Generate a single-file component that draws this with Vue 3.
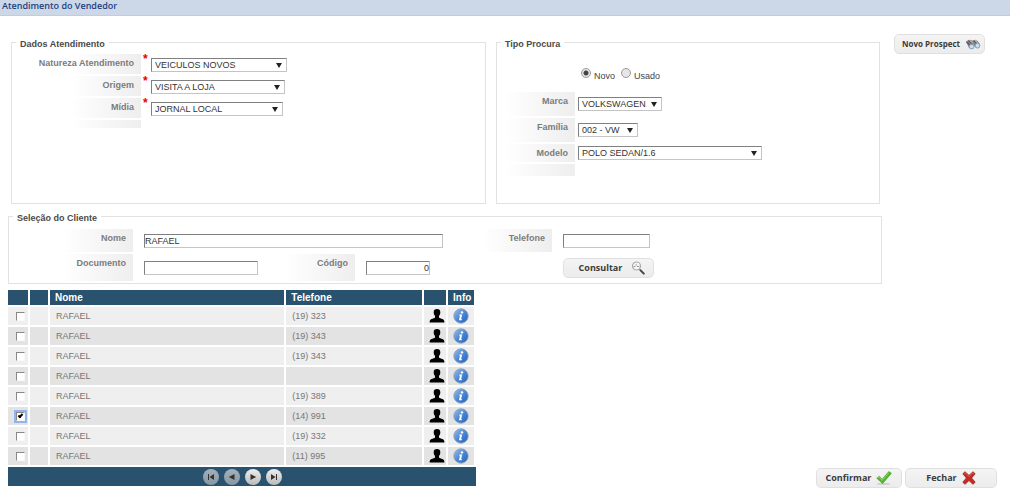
<script setup>
import { ref } from 'vue'

const natureza = ref('VEICULOS NOVOS')
const origem = ref('VISITA A LOJA')
const midia = ref('JORNAL LOCAL')
const tipo = ref('Novo')
const marca = ref('VOLKSWAGEN')
const familia = ref('002 - VW')
const modelo = ref('POLO SEDAN/1.6')
const nome = ref('RAFAEL')
const telefone = ref('')
const documento = ref('')
const codigo = ref('0')

const clientes = ref([
  { id: 1, nome: 'RAFAEL', telefone: '(19) 323', marcado: false },
  { id: 2, nome: 'RAFAEL', telefone: '(19) 343', marcado: false },
  { id: 3, nome: 'RAFAEL', telefone: '(19) 343', marcado: false },
  { id: 4, nome: 'RAFAEL', telefone: '', marcado: false },
  { id: 5, nome: 'RAFAEL', telefone: '(19) 389', marcado: false },
  { id: 6, nome: 'RAFAEL', telefone: '(14) 991', marcado: true },
  { id: 7, nome: 'RAFAEL', telefone: '(19) 332', marcado: false },
  { id: 8, nome: 'RAFAEL', telefone: '(11) 995', marcado: false }
])
</script>

<template>
  <div class="page">
    <header class="titlebar">
      <h1>Atendimento do Vendedor</h1>
    </header>

    <main>
      <div class="top">
        <div class="forms">
          <div class="panels">
            <fieldset class="panel">
              <legend>Dados Atendimento</legend>
              <div class="rows rows-dados">
                <label for="natureza" class="lbl">Natureza Atendimento</label>
                <span class="req">*</span>
                <span class="select w-136">
                  <select id="natureza" v-model="natureza"><option>VEICULOS NOVOS</option></select>
                </span>
                <label for="origem" class="lbl">Origem</label>
                <span class="req">*</span>
                <span class="select w-134">
                  <select id="origem" v-model="origem"><option>VISITA A LOJA</option></select>
                </span>
                <label for="midia" class="lbl">Mídia</label>
                <span class="req">*</span>
                <span class="select w-132">
                  <select id="midia" v-model="midia"><option>JORNAL LOCAL</option></select>
                </span>
                <span class="lbl"></span>
              </div>
            </fieldset>

            <fieldset class="panel">
              <legend>Tipo Procura</legend>
              <div class="radios">
                <label><input v-model="tipo" type="radio" name="tipo" value="Novo"><span>Novo</span></label>
                <label><input v-model="tipo" type="radio" name="tipo" value="Usado"><span>Usado</span></label>
              </div>
              <div class="rows rows-tipo">
                <label for="marca" class="lbl">Marca</label>
                <span class="select w-84">
                  <select id="marca" v-model="marca"><option>VOLKSWAGEN</option></select>
                </span>
                <label for="familia" class="lbl">Família</label>
                <span class="select w-60">
                  <select id="familia" v-model="familia"><option>002 - VW</option></select>
                </span>
                <label for="modelo" class="lbl">Modelo</label>
                <span class="select w-184">
                  <select id="modelo" v-model="modelo"><option>POLO SEDAN/1.6</option></select>
                </span>
                <span class="lbl"></span>
              </div>
            </fieldset>
          </div>

          <fieldset class="panel">
            <legend>Seleção do Cliente</legend>
            <div class="cliente">
              <label for="nome" class="lbl">Nome</label>
              <span class="field wide"><input id="nome" v-model="nome" type="text"></span>
              <label for="telefone" class="lbl">Telefone</label>
              <span class="field"><input id="telefone" v-model="telefone" type="text" class="tel"></span>
              <label for="documento" class="lbl">Documento</label>
              <span class="field low"><input id="documento" v-model="documento" type="text"></span>
              <label for="codigo" class="lbl">Código</label>
              <span class="field low"><input id="codigo" v-model="codigo" type="text" class="cod"></span>
              <span class="field consult">
                <button type="button" class="btn">
                  <span>Consultar</span>
                  <svg width="14" height="14" viewBox="0 0 14 14" aria-hidden="true">
                    <circle cx="5.5" cy="5" r="4" fill="#f6f6f6" stroke="#aaa" stroke-width="1.2" />
                    <path d="M2.5 5.5h2M6 5.5h2.3M5.2 3.2v1.4" stroke="#999" stroke-width="1" />
                    <path d="M8.4 8.2l1.6 1.5" stroke="#888" stroke-width="1.2" />
                    <path d="M9.6 9.4l3.2 3.2" stroke="#444" stroke-width="2" stroke-linecap="round" />
                  </svg>
                </button>
              </span>
            </div>
          </fieldset>
        </div>

        <button type="button" class="btn prospect">
          <span>Novo Prospect</span>
          <svg width="16" height="11" viewBox="0 0 15 11" aria-hidden="true">
            <path d="M.5 2.2L4 .8l3 .6 3-.6 2.4 1.4 2.2 3.6-3 3.4-3-2.4-2 2.6-3.4-1z" fill="#8d8985" />
            <path d="M1 3.2l3.2 2.6M2.8 1.6l3.4 2.6M8 1.8l2.8 2.4" stroke="#55524f" stroke-width="1.1" />
            <path d="M4.2 1.6l3 2M9.4 1.4l2.6 2.2" stroke="#d8d5d0" stroke-width=".9" />
            <ellipse cx="6.2" cy="7.6" rx="2.5" ry="2.3" fill="#c9dcf4" stroke="#6f8fb9" stroke-width=".8" />
            <ellipse cx="12" cy="6.6" rx="2.3" ry="2.5" fill="#c9dcf4" stroke="#6f8fb9" stroke-width=".8" />
          </svg>
        </button>
      </div>

      <div class="bottom">
        <table>
          <colgroup>
            <col class="c-check"><col class="c-blank"><col class="c-nome"><col class="c-tel"><col class="c-person"><col class="c-info">
          </colgroup>
          <thead>
            <tr><th></th><th></th><th>Nome</th><th>Telefone</th><th></th><th>Info</th></tr>
          </thead>
          <tbody>
            <tr v-for="c in clientes" :key="c.id">
              <td class="check"><input v-model="c.marcado" type="checkbox" :aria-label="c.nome"></td>
              <td></td>
              <td>{{ c.nome }}</td>
              <td>{{ c.telefone }}</td>
              <td class="icon">
                <svg width="16" height="14" viewBox="0 0 16 14" aria-hidden="true">
                  <path d="M8 0c2.200 0 3.300 1.100 3.300 3.200 0 1.700-.5 2.800-1.300 3.600v1.700c.5.700 2 1 3.400 1.500 1.500.5 2 1.500 2 3.500H.6c0-2 .5-3 2-3.500C4 9.500 5.500 9.200 6 8.500V6.800C5.200 6 4.700 4.900 4.700 3.200 4.700 1.100 5.800 0 8 0z" fill="#000" />
                </svg>
              </td>
              <td class="icon">
                <button type="button" class="plain" aria-label="Info">
                  <svg width="16" height="16" viewBox="0 0 16 16">
                    <defs>
                      <linearGradient :id="'info' + c.id" x1="0" y1="0" x2="1" y2="1">
                        <stop offset="0" stop-color="#9cc3ee" />
                        <stop offset=".5" stop-color="#4a87d3" />
                        <stop offset="1" stop-color="#1f5fbd" />
                      </linearGradient>
                    </defs>
                    <circle cx="8" cy="8" r="7.2" :fill="'url(#info' + c.id + ')'" stroke="#8b9fb8" stroke-width=".9" />
                    <circle cx="9" cy="4.4" r="1.2" fill="#fff" />
                    <path d="M6.2 6.500h3L8.100 11.300h1l-.3 1H5.900l1.100-4.700H6z" fill="#fff" />
                  </svg>
                </button>
              </td>
            </tr>
          </tbody>
          <tfoot>
            <tr>
              <td colspan="6">
                <nav class="pager">
                  <button type="button" class="off" aria-label="Primeira">
                    <svg width="8" height="8" viewBox="0 0 8 8"><path d="M1 1h1v6H1zM7 1v6L2.500 4z" /></svg>
                  </button>
                  <button type="button" class="off" aria-label="Anterior">
                    <svg width="8" height="8" viewBox="0 0 8 8"><path d="M6.500 1v6L.8 4z" /></svg>
                  </button>
                  <button type="button" aria-label="Próxima">
                    <svg width="8" height="8" viewBox="0 0 8 8"><path d="M1.500 1v6L7.200 4z" /></svg>
                  </button>
                  <button type="button" aria-label="Última">
                    <svg width="8" height="8" viewBox="0 0 8 8"><path d="M6 1h1v6H6zM1 1v6l4.500-3z" /></svg>
                  </button>
                </nav>
              </td>
            </tr>
          </tfoot>
        </table>

        <div class="actions">
          <button type="button" class="btn confirm">
            <span>Confirmar</span>
            <svg width="16" height="14" viewBox="0 0 16 14" aria-hidden="true">
              <ellipse cx="7.5" cy="12.9" rx="7" ry=".7" fill="#bbb" />
              <path d="M.8 7.200L3.400 5.200 6 8.400 12.800.6 15.400 2.200 6.600 12.600z" fill="#52b52c" stroke="#3a9a1b" stroke-width=".6" />
              <path d="M2 7l1.300-.9L6 9.500 13 1.600" fill="none" stroke="#90dc62" stroke-width=".9" />
            </svg>
          </button>
          <button type="button" class="btn close">
            <span>Fechar</span>
            <svg width="14" height="14" viewBox="0 0 14 14" aria-hidden="true">
              <path d="M.8 2.800L3 .7l4 3.700L11 .7l2.200 2.100L9.600 7l3.600 4.200L11 13.300 7 9.600l-4 3.700L.8 11.200 4.400 7z" fill="#c62a22" stroke="#8f1914" stroke-width=".7" />
              <path d="M2 2.700l1-.9 4 3.800 4-3.800 1 .9" fill="none" stroke="#e0655b" stroke-width=".8" />
            </svg>
          </button>
        </div>
      </div>
    </main>
  </div>
</template>

<style>
body {
  margin: 0;
  background: #fff;
}
</style>

<style scoped>
.page {
  font-family: "Liberation Sans", Arial, sans-serif;
  font-size: 9px;
  color: #444;
}

.page *,
.page *::after {
  box-sizing: border-box;
}

.titlebar {
  padding: 0 2px 3px;
  background: #ccd7e8;
  border-bottom: 1px solid #bccfe2;
}

h1 {
  margin: 0;
  font: 600 9px/12px "Open Sans", "Noto Sans", sans-serif;
  color: #1c3f80;
}

main {
  padding: 18px 13px 0 8px;
}

.top {
  display: grid;
  grid-template-columns: minmax(0, 1fr) 91px;
  gap: 12px;
  align-items: start;
  padding-right: 12px;
}

.forms {
  display: flex;
  flex-direction: column;
  gap: 4px;
}

.panels {
  display: grid;
  grid-template-columns: 475fr 384fr;
  gap: 10px;
  padding: 0 2px 0 3px;
}

.panel {
  min-width: 0;
  margin: 0;
  padding: 0;
  border: 1px solid #e2e2e2;
}

legend {
  margin-left: 4px;
  padding: 3px 4px 0;
  font-weight: 700;
  line-height: 14px;
  color: #4a4a4a;
}

.rows {
  display: grid;
  row-gap: 2px;
  align-items: start;
}

.rows-dados {
  grid-template-columns: 129px 10px 1fr;
  grid-template-rows: 20px 20px 20px 8px;
  padding-top: 3px;
}

.rows-tipo {
  grid-template-columns: 78px 1fr;
  grid-template-rows: 24px 24px 18px 12px;
  column-gap: 3px;
  padding-bottom: 27px;
}

.lbl {
  align-self: stretch;
  padding-right: 7px;
  background: linear-gradient(to right, transparent calc(100% - 70px), #eee);
  font-weight: 700;
  line-height: 18px;
  text-align: right;
  color: #7c7c7c;
}

.req {
  padding-left: 2px;
  font-size: 12px;
  font-weight: 700;
  line-height: 10px;
  color: #e00;
}

.select {
  position: relative;
  align-self: center;
}

.rows-dados .select {
  align-self: start;
  margin-top: 4px;
}

.select::after {
  content: "";
  position: absolute;
  top: 5px;
  right: 5px;
  border: 3px solid transparent;
  border-top: 5px solid #222;
  border-bottom: 0;
  pointer-events: none;
}

.w-136 { width: 136px; }
.w-134 { width: 134px; }
.w-132 { width: 132px; }
.w-84 { width: 84px; }
.w-60 { width: 60px; }
.w-184 { width: 184px; }

select,
input[type="text"] {
  display: block;
  width: 100%;
  height: 14px;
  margin: 0;
  border: 1px solid #c4c4c4;
  border-top-color: #808080;
  border-left-color: #808080;
  border-radius: 0;
  background: #fff;
  font: 9px/12px "Liberation Sans", Arial, sans-serif;
  color: #333;
  appearance: none;
}

select {
  padding: 0 3px;
}

input[type="text"] {
  padding: 0;
}

.radios {
  display: flex;
  gap: 6px;
  padding: 17px 0 9px 84px;
}

.radios label {
  display: flex;
  gap: 3px;
  line-height: 14px;
}

.radios input {
  width: 10px;
  height: 10px;
  margin: 0;
  border: 1px solid #999;
  border-radius: 50%;
  background: #e6e6e6;
  appearance: none;
}

.radios input:checked {
  background: radial-gradient(circle, #444 0 2px, #e6e6e6 3px);
}

.radios span {
  padding-top: 1px;
}

.cliente {
  display: grid;
  grid-template-columns: 124fr 125fr 97fr 88fr 109fr 329fr;
  grid-template-rows: 23px 27px;
  row-gap: 2px;
  padding: 4px 0 2px;
}

.field {
  padding: 5px 0 0 11px;
}

.wide {
  grid-column: span 3;
}

.low {
  padding-top: 7px;
}

.consult {
  grid-column: 6;
  padding-top: 4px;
}

.field .tel {
  width: 87px;
}

.field .cod {
  width: 64px;
  text-align: right;
}

.btn {
  display: flex;
  align-items: center;
  justify-content: center;
  gap: 5px;
  height: 20px;
  padding: 0;
  border: 1px solid #e0e0e0;
  border-radius: 5px;
  background: linear-gradient(#f4f4f4, #ececec);
  font: 700 9px/16px "Open Sans", "Noto Sans", sans-serif;
  color: #3c3c3c;
}

.consult .btn {
  width: 91px;
  gap: 9px;
  padding-left: 7px;
}

.prospect {
  gap: 5px;
  padding-left: 4px;
  font-size: 8px;
}

.bottom {
  display: grid;
  grid-template-columns: 468fr 521fr;
  align-items: end;
  padding-top: 6px;
}

table {
  width: 100%;
  margin-bottom: 2px;
  table-layout: fixed;
  border-collapse: separate;
  border-spacing: 0;
}

.c-check { width: 22px; }
.c-blank { width: 20px; }
.c-nome { width: 50.5%; }
.c-person { width: 24px; }
.c-info { width: 28px; }

th,
td {
  padding: 0 0 0 6px;
  border-right: 2px solid #fff;
  border-bottom: 2px solid #fff;
  overflow: hidden;
  white-space: nowrap;
  text-align: left;
}

th {
  height: 17px;
  padding-left: 5px;
  background: #29526f;
  font-size: 10px;
  line-height: 14px;
  color: #fff;
}

td {
  height: 20px;
  background: #efefef;
  line-height: 14px;
  color: #777;
}

tbody tr:nth-child(even) td {
  background: #e3e3e3;
}

td.icon {
  padding: 0 0 0 5px;
}

td.icon svg {
  display: block;
}

.plain {
  display: block;
  padding: 0;
  border: 0;
  background: none;
}

td.check {
  padding: 0 0 0 8px;
}

td.check input {
  position: relative;
  display: block;
  width: 9px;
  height: 9px;
  margin: 0;
  border: 1px solid #f8f8f8;
  border-top-color: #888;
  border-left-color: #888;
  background: #fff;
  appearance: none;
}

td.check input:checked {
  outline: 2px solid #94b4ee;
}

td.check input:checked::after {
  content: "";
  position: absolute;
  top: 0;
  left: 2px;
  width: 3px;
  height: 5px;
  border: solid #000;
  border-width: 0 2px 2px 0;
  transform: rotate(42deg);
}

tfoot td {
  height: 19px;
  padding: 0;
  border: 0;
  background: #29526f;
}

.pager {
  display: flex;
  justify-content: center;
  gap: 5px;
}

.pager button {
  display: flex;
  align-items: center;
  justify-content: center;
  width: 16px;
  height: 16px;
  padding: 0;
  border: 0;
  border-radius: 50%;
  background: linear-gradient(#eee, #bbb);
}

.pager .off {
  background: linear-gradient(#a3b1bb, #8797a3);
}

.pager path {
  fill: #333;
}

.actions {
  display: flex;
  justify-content: flex-end;
  gap: 3px;
}

.confirm {
  width: 86px;
}

.close {
  width: 92px;
}
</style>
